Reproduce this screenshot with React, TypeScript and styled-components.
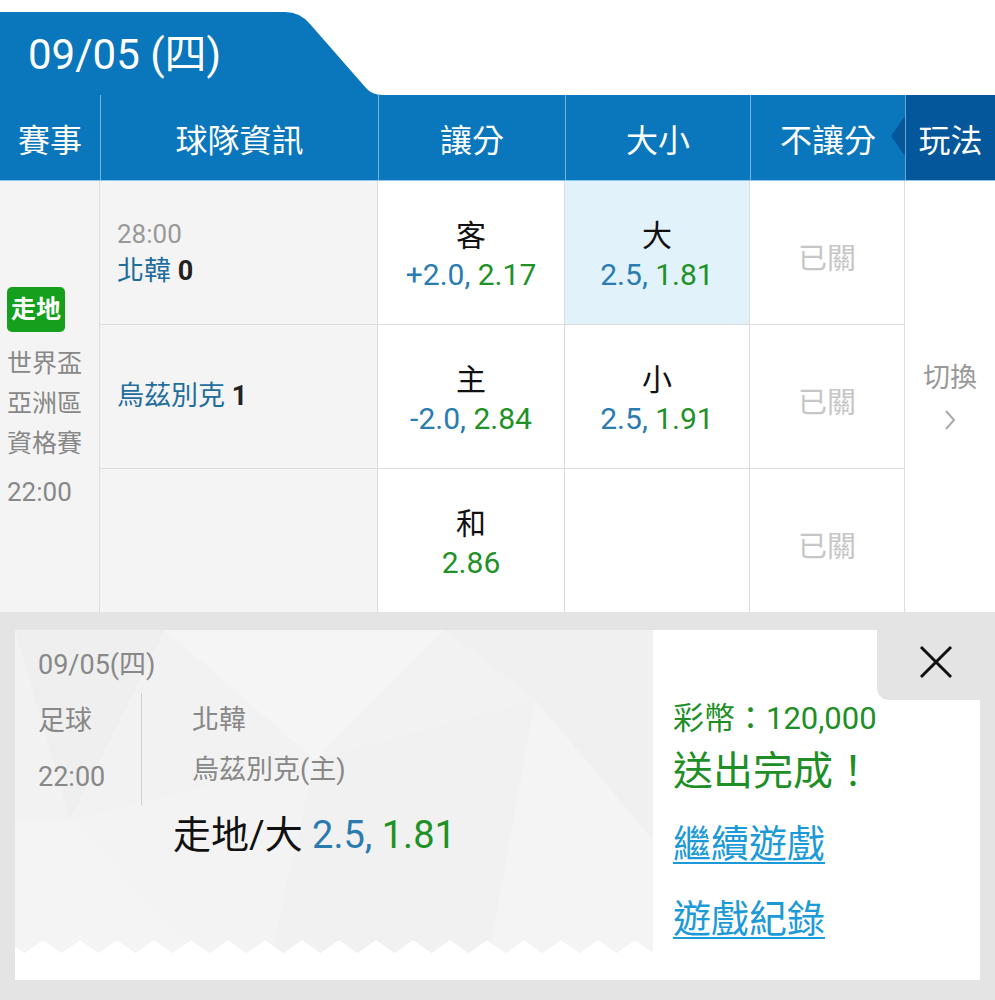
import React from 'react';
import styled, { createGlobalStyle } from 'styled-components';

const GlobalStyle = createGlobalStyle`
  html, body { margin: 0; padding: 0; background: #fff; }
  body { font-family: Roboto, "Noto Sans CJK TC", sans-serif; }
  * { box-sizing: border-box; }
`;

const COLS = '100px 278px 187px 185px 155px 90px';
const BLUE = '#0a76bc';
const DARK = '#04579a';
const LINE = '#dcdcdc';

const Page = styled.div`
  width: 995px;
  height: 1000px;
  display: flex;
  flex-direction: column;
  overflow: hidden;
  background: #fff;
`;

const TabBar = styled.div`
  height: 95px;
  padding-top: 12px;
  display: flex;
`;

const DateTab = styled.div`
  width: 382px;
  height: 83px;
  background: ${BLUE};
  color: #fff;
  font-size: 42px;
  display: flex;
  align-items: center;
  padding: 0 0 7px 28px;
  clip-path: path('M0 0 H285 Q300 0 310 12 L366 76 Q372 83 382 83 H0 Z');
`;

const HeaderRow = styled.div`
  display: grid;
  grid-template-columns: ${COLS};
  height: 86px;
  background: ${BLUE};
  border-bottom: 1px solid #8cc6ea;
`;

const HeadCell = styled.div<{ $first?: boolean; $dark?: boolean }>`
  position: relative;
  display: flex;
  align-items: center;
  justify-content: center;
  color: #fff;
  font-size: 32px;
  background: ${(p) => (p.$dark ? DARK : 'transparent')};
  border-left: ${(p) => (p.$first ? 'none' : '1px solid rgba(255,255,255,0.45)')};
  ${(p) =>
    p.$dark
      ? `&::before {
    content: '';
    position: absolute;
    left: -15px;
    top: 21px;
    border-right: 14px solid ${DARK};
    border-top: 20px solid transparent;
    border-bottom: 20px solid transparent;
  }`
      : ''}
`;

const Body = styled.div`
  display: grid;
  grid-template-columns: ${COLS};
  grid-template-rows: 144px 144px 143px;
`;

const LeagueCell = styled.div`
  grid-column: 1;
  grid-row: 1 / span 3;
  background: #f4f4f4;
  border-right: 1px solid ${LINE};
  display: flex;
  flex-direction: column;
  justify-content: center;
  align-items: flex-start;
  padding: 6px 0 0 7px;
  color: #888;
  font-size: 25px;
`;

const LiveBadge = styled.div`
  background: #14a01c;
  color: #fff;
  font-weight: bold;
  font-size: 25px;
  line-height: 35px;
  padding: 5px 4px;
  border-radius: 5px;
  margin-bottom: 12px;
`;

const LeagueName = styled.div`
  line-height: 40px;
`;

const LeagueTime = styled.div`
  font-size: 26px;
  line-height: 40px;
  margin-top: 8px;
`;

const TeamCell = styled.div<{ $last?: boolean }>`
  grid-column: 2;
  background: #f4f4f4;
  border-right: 1px solid ${LINE};
  border-bottom: ${(p) => (p.$last ? 'none' : `1px solid ${LINE}`)};
  display: flex;
  flex-direction: column;
  justify-content: center;
  padding: 0 0 0 17px;
`;

const Clock = styled.div`
  font-size: 26px;
  line-height: 37px;
  color: #999;
`;

const TeamLine = styled.div`
  font-size: 27px;
  line-height: 37px;
  color: #1f6e9c;
`;

const Score = styled.b`
  color: #222;
`;

const OddsCell = styled.div<{ $hl?: boolean; $last?: boolean }>`
  background: ${(p) => (p.$hl ? '#e1f2fb' : '#fff')};
  border-right: 1px solid ${LINE};
  border-bottom: ${(p) => (p.$last ? 'none' : `1px solid ${LINE}`)};
  display: flex;
  flex-direction: column;
  align-items: center;
  justify-content: center;
  padding-top: 7px;
`;

const Pick = styled.div`
  font-size: 30px;
  line-height: 38px;
  color: #111;
`;

const OddsLine = styled.div`
  font-size: 30px;
  line-height: 40px;
`;

const Hdp = styled.span`
  color: #2a7bb0;
`;

const Price = styled.span`
  color: #1e9127;
`;

const Closed = styled.div`
  font-size: 29px;
  color: #c6c6c6;
`;

const SwitchCell = styled.div`
  grid-column: 6;
  grid-row: 1 / span 3;
  background: #fff;
  display: flex;
  flex-direction: column;
  align-items: center;
  justify-content: center;
  gap: 14px;
  color: #999;
  font-size: 27px;
  padding-bottom: 6px;
`;

const Panel = styled.div`
  flex: 1;
  background: #e4e4e4;
  padding: 18px 15px 20px 15px;
  display: flex;
`;

const Card = styled.div`
  flex: 1;
  display: flex;
  background: #fff;
`;

const Ticket = styled.div`
  position: relative;
  width: 638px;
  padding: 18px 0 0 23px;
  overflow: hidden;
`;

const Texture = styled.svg`
  position: absolute;
  left: 0;
  top: 0;
  width: 638px;
  height: 350px;
  z-index: 0;
`;

const TicketContent = styled.div`
  position: relative;
  z-index: 1;
  color: #888;
  font-size: 27px;
`;

const TicketDate = styled.div`
  line-height: 34px;
`;

const InfoRow = styled.div`
  display: flex;
  margin-top: 13px;
`;

const InfoLeft = styled.div`
  width: 104px;
  border-right: 1px solid #cfcfcf;
  line-height: 56px;
  margin-top: -2px;
`;

const InfoRight = styled.div`
  padding-left: 50px;
  line-height: 50px;
`;

const BetLine = styled.div`
  margin: 8px 0 0 135px;
  font-size: 38px;
  line-height: 44px;
  color: #111;
`;

const Result = styled.div`
  flex: 1;
  display: flex;
  flex-direction: column;
`;

const CloseRow = styled.div`
  display: flex;
  justify-content: flex-end;
`;

const CloseTab = styled.div`
  width: 103px;
  height: 70px;
  background: #e4e4e4;
  border-bottom-left-radius: 12px;
  display: flex;
  align-items: center;
  justify-content: center;
  padding: 0 0 6px 14px;
`;

const Msg = styled.div`
  padding: 2px 0 0 20px;
  display: flex;
  flex-direction: column;
  align-items: flex-start;
`;

const Coins = styled.div`
  font-size: 31px;
  line-height: 34px;
  color: #1e8f27;
`;

const Done = styled.div`
  margin-top: 13px;
  font-size: 40px;
  line-height: 46px;
  color: #1e8f27;
`;

const Link = styled.a<{ $gap: number }>`
  margin-top: ${(p) => p.$gap}px;
  font-size: 38px;
  line-height: 46px;
  color: #1c9ad8;
  text-decoration: underline;
  text-decoration-thickness: 2px;
  text-underline-offset: 5px;
  cursor: pointer;
`;

function zigzag(): string {
  const pts: string[] = ['0,0', '638,0', '638,323'];
  const arr: string[] = [];
  for (let k = 0; k * 18.5 - 9 <= 660; k++) {
    const x = 9.5 + k * 18.5 - 18.5;
    arr.push(`${x.toFixed(1)},${k % 2 === 0 ? 310 : 323}`);
  }
  arr.reverse();
  return [...pts, ...arr].join(' ');
}

export default function App() {
  return (
    <Page>
      <GlobalStyle />
      <TabBar>
        <DateTab>09/05 (四)</DateTab>
      </TabBar>
      <HeaderRow>
        <HeadCell $first>賽事</HeadCell>
        <HeadCell>球隊資訊</HeadCell>
        <HeadCell>讓分</HeadCell>
        <HeadCell>大小</HeadCell>
        <HeadCell>不讓分</HeadCell>
        <HeadCell $dark>玩法</HeadCell>
      </HeaderRow>
      <Body>
        <LeagueCell>
          <LiveBadge>走地</LiveBadge>
          <LeagueName>世界盃</LeagueName>
          <LeagueName>亞洲區</LeagueName>
          <LeagueName>資格賽</LeagueName>
          <LeagueTime>22:00</LeagueTime>
        </LeagueCell>
        <SwitchCell>
          <div>切換</div>
          <svg width="12" height="22" viewBox="0 0 12 22">
            <polyline points="2,2 10,11 2,20" fill="none" stroke="#aaa" strokeWidth="2" />
          </svg>
        </SwitchCell>

        <TeamCell>
          <Clock>28:00</Clock>
          <TeamLine>
            北韓 <Score>0</Score>
          </TeamLine>
        </TeamCell>
        <OddsCell>
          <Pick>客</Pick>
          <OddsLine>
            <Hdp>+2.0, </Hdp>
            <Price>2.17</Price>
          </OddsLine>
        </OddsCell>
        <OddsCell $hl>
          <Pick>大</Pick>
          <OddsLine>
            <Hdp>2.5, </Hdp>
            <Price>1.81</Price>
          </OddsLine>
        </OddsCell>
        <OddsCell>
          <Closed>已關</Closed>
        </OddsCell>

        <TeamCell>
          <TeamLine>
            烏茲別克 <Score>1</Score>
          </TeamLine>
        </TeamCell>
        <OddsCell>
          <Pick>主</Pick>
          <OddsLine>
            <Hdp>-2.0, </Hdp>
            <Price>2.84</Price>
          </OddsLine>
        </OddsCell>
        <OddsCell>
          <Pick>小</Pick>
          <OddsLine>
            <Hdp>2.5, </Hdp>
            <Price>1.91</Price>
          </OddsLine>
        </OddsCell>
        <OddsCell>
          <Closed>已關</Closed>
        </OddsCell>

        <TeamCell $last />
        <OddsCell $last>
          <Pick>和</Pick>
          <OddsLine>
            <Price>2.86</Price>
          </OddsLine>
        </OddsCell>
        <OddsCell $last />
        <OddsCell $last>
          <Closed>已關</Closed>
        </OddsCell>
      </Body>

      <Panel>
        <Card>
          <Ticket>
            <Texture viewBox="0 0 638 350" preserveAspectRatio="none">
              <defs>
                <clipPath id="tk">
                  <polygon points={zigzag()} />
                </clipPath>
              </defs>
              <g clipPath="url(#tk)">
                <rect x="0" y="0" width="638" height="350" fill="#f2f2f2" />
                <polygon points="0,0 150,0 55,190" fill="#efefef" />
                <polygon points="150,0 430,0 300,130" fill="#f5f5f5" />
                <polygon points="430,0 638,0 638,210 520,70" fill="#f0f0f0" />
                <polygon points="0,190 55,190 210,350 0,350" fill="#f4f4f4" />
                <polygon points="300,130 520,70 470,350 250,350" fill="#f1f1f1" />
                <polygon points="520,70 638,210 638,350 470,350" fill="#f4f4f4" />
                <polygon points="55,190 300,130 250,350 210,350" fill="#f3f3f3" />
              </g>
            </Texture>
            <TicketContent>
              <TicketDate>09/05(四)</TicketDate>
              <InfoRow>
                <InfoLeft>
                  <div>足球</div>
                  <div>22:00</div>
                </InfoLeft>
                <InfoRight>
                  <div>北韓</div>
                  <div>烏茲別克(主)</div>
                </InfoRight>
              </InfoRow>
              <BetLine>
                走地/大 <Hdp>2.5, </Hdp>
                <Price>1.81</Price>
              </BetLine>
            </TicketContent>
          </Ticket>
          <Result>
            <CloseRow>
              <CloseTab>
                <svg width="34" height="34" viewBox="0 0 34 34">
                  <line x1="2" y1="2" x2="32" y2="32" stroke="#111" strokeWidth="3" />
                  <line x1="32" y1="2" x2="2" y2="32" stroke="#111" strokeWidth="3" />
                </svg>
              </CloseTab>
            </CloseRow>
            <Msg>
              <Coins>彩幣：120,000</Coins>
              <Done>送出完成！</Done>
              <Link $gap={26}>繼續遊戲</Link>
              <Link $gap={29}>遊戲紀錄</Link>
            </Msg>
          </Result>
        </Card>
      </Panel>
    </Page>
  );
}
